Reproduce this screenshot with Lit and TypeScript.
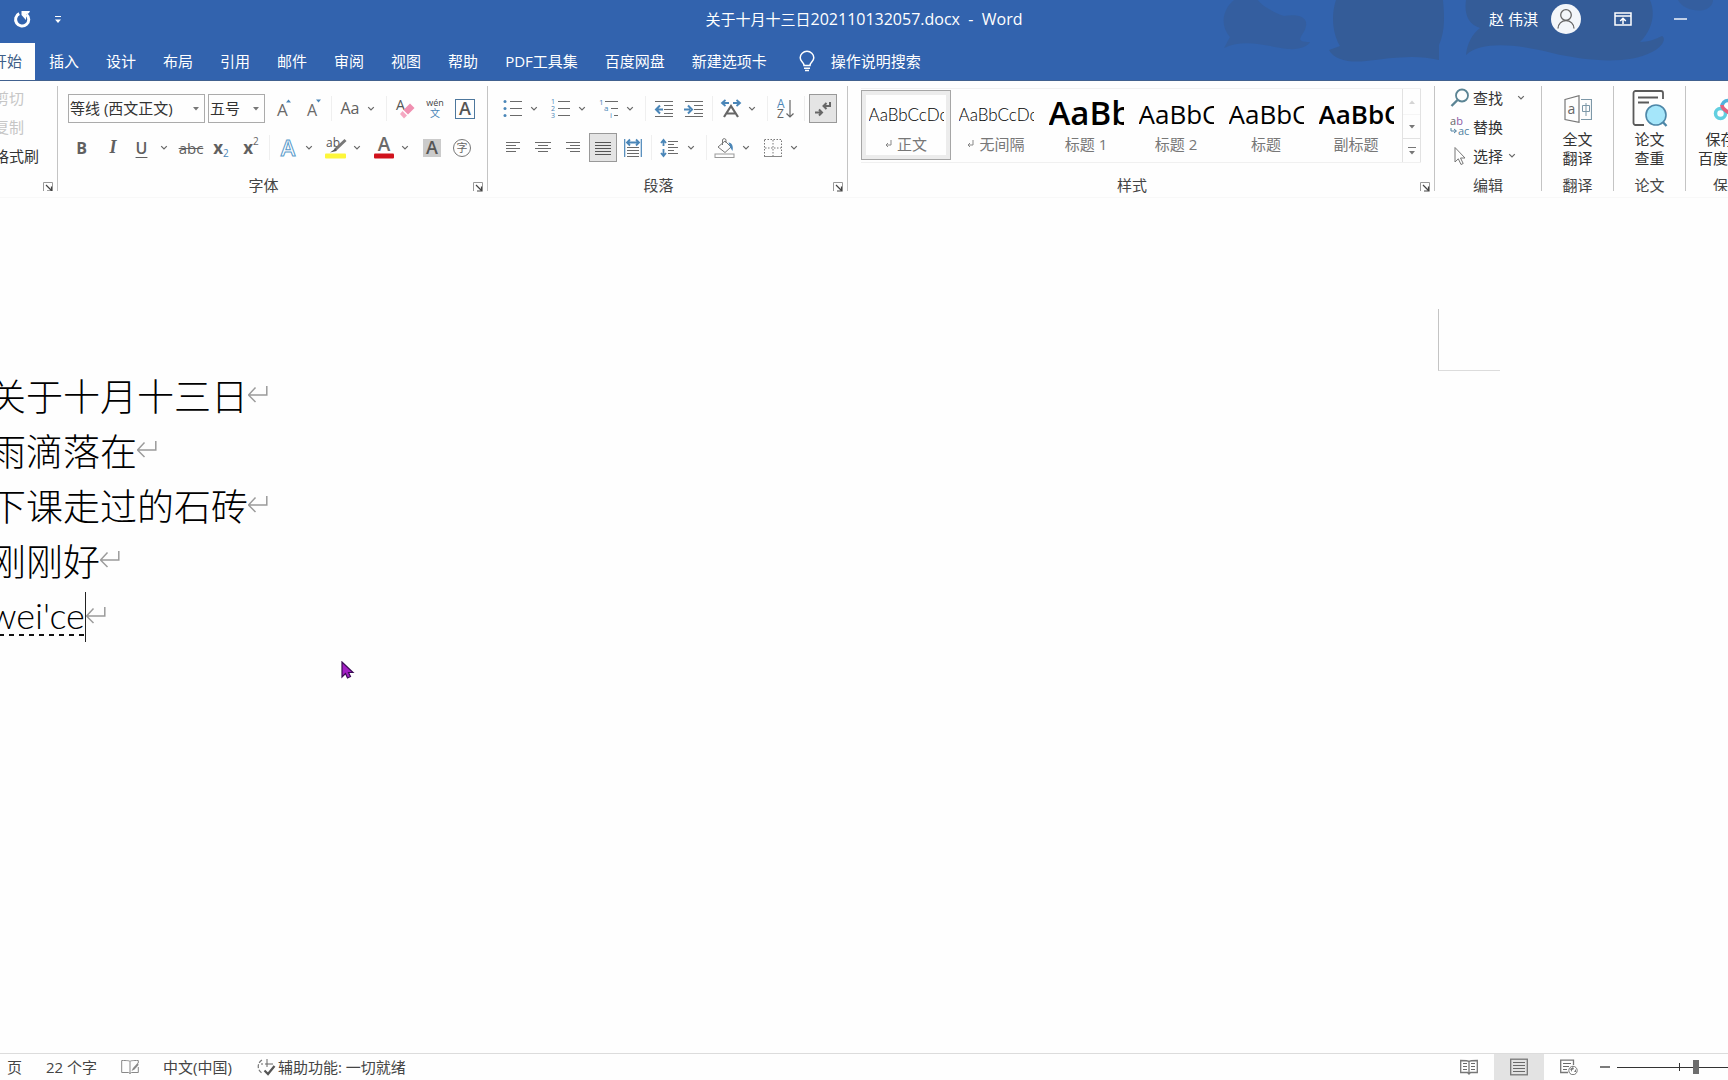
import { LitElement, html, svg, css, nothing, TemplateResult } from "lit";
import { customElement, property } from "lit/decorators.js";

const icon = (w: number, h: number, body: unknown) =>
  html`<svg width=${w} height=${h} viewBox="0 0 ${w} ${h}" fill="none" aria-hidden="true">${body}</svg>`;

const BLUE = "#4a86b8";
const GREY = "#6a6a6a";

const lines = (rows: [number, number, number][], color = GREY) =>
  rows.map(([x1, x2, y]) => svg`<path d="M${x1} ${y}H${x2}" stroke=${color} />`);

const icons = {
  undo: icon(20, 20, svg`<path d="M7.2 4.6A6.6 6.6 0 1 0 14.6 5.6" stroke="#fff" stroke-width="3"/><path d="M9.5 2H18l-1 2-2.5 1.5-.6 5.5L9.5 6z" fill="#fff"/>`),
  customize: icon(8, 10, svg`<path d="M1 2.5H7" stroke="#fff"/><path d="M1 5.500H7L4 9z" fill="#fff"/>`),
  bulb: icon(18, 22, svg`<path d="M6 15.500C6 12.500 2.200 11.500 2.200 7.800a6.800 6.500 0 0 1 13.600 0C15.800 11.500 12 12.500 12 15.500z" stroke="#fff" stroke-width="1.500"/><path d="M6 18.300H12M7 20.500H11" stroke="#fff" stroke-width="1.500"/>`),
  person: icon(30, 30, svg`<circle cx="15" cy="15" r="15" fill="#f3f6fa"/><circle cx="15" cy="11" r="5.300" stroke="#666" stroke-width="1.300"/><path d="M7 24.500a8 8 0 0 1 16 0" stroke="#666" stroke-width="1.300"/>`),
  ribbonOptions: icon(18, 14, svg`<path d="M1 1H17V13H1zM1 4H17" stroke="#fff" stroke-width="1.500"/><path d="M9 12V6.500M6.200 9L9 6.200L11.800 9" stroke="#fff" stroke-width="1.500"/>`),
  minimize: icon(13, 2, svg`<path d="M0 1H13" stroke="#fff" stroke-width="1.400"/>`),
  chevron: icon(8, 6, svg`<path d="M1.200 1.200L4 4L6.800 1.200" stroke="#666" stroke-width="1.200"/>`),
  down: icon(6, 4, svg`<path d="M0 0H6L3 3.500z" fill="#777"/>`),
  launcher: icon(10, 10, svg`<path d="M.5 9V.5H9.500V9.500" stroke="#999"/><path d="M3 3L8 8M8.500 4.500V9H4" stroke="#444" stroke-width="1.200"/>`),
  grow: icon(20, 20, svg`<text x="4" y="17" font-size="17" fill="#6a6a6a">A</text><path d="M13 3.500L15.500 .5L18 3.500z" fill=${BLUE}/>`),
  shrink: icon(20, 20, svg`<text x="4" y="17" font-size="16" fill="#6a6a6a">A</text><path d="M13 .5L15.500 3.500L18 .5z" fill=${BLUE}/>`),
  eraser: icon(20, 22, svg`<text x="1" y="12" font-size="14" fill="#555">A</text><path d="M15 5.500L19.500 10L13 16.500L8.500 12z" fill="#f08fb0"/><path d="M7.500 13L12 17.500L9 20.500L5 16z" fill="#f5a8c2"/>`),
  phonetic: icon(20, 22, svg`<text x="10" y="8" font-size="9" text-anchor="middle" fill="#444">wén</text><text x="10" y="19" font-size="10" text-anchor="middle" fill=${BLUE}>文</text>`),
  boxedA: icon(20, 20, svg`<rect x=".5" y=".5" width="19" height="19" stroke="#4d779d"/><text x="10" y="16" font-size="18" font-weight="600" text-anchor="middle" fill="#555">A</text>`),
  outlineA: icon(20, 20, svg`<text x="10" y="18" font-size="22" font-weight="600" text-anchor="middle" fill="#fff" stroke="#5a9bcb">A</text>`),
  highlight: icon(22, 22, svg`<text x="1" y="10" font-size="12" fill="#555">ab</text><path d="M20.500 3L10 13" stroke="#777" stroke-width="3"/><path d="M10.500 11.500L5 15.500L11.500 14z" fill="#555"/><rect y="16.500" width="21" height="5" rx="1" fill="#fdf63a"/>`),
  fontColor: icon(20, 22, svg`<text x="10" y="14" font-size="19" font-weight="600" text-anchor="middle" fill="#6a6a6a">A</text><rect y="16.500" width="20" height="5" rx="1" fill="#d0121c"/>`),
  shadedA: icon(18, 18, svg`<rect width="18" height="18" fill="#cbcbcb"/><text x="9" y="15" font-size="18" font-weight="600" text-anchor="middle" fill="#555">A</text>`),
  circled: icon(20, 20, svg`<circle cx="10" cy="10" r="8.500" stroke="#777"/><text x="10" y="14" font-size="11" text-anchor="middle" fill="#666">字</text>`),
  bullets: icon(20, 20, svg`${lines([[7, 19, 2.5], [7, 19, 9.5], [7, 19, 16.5]])}<circle cx="2" cy="2.500" r="1.500" fill=${BLUE}/><circle cx="2" cy="9.500" r="1.500" fill=${BLUE}/><circle cx="2" cy="16.500" r="1.500" fill=${BLUE}/>`),
  numbers: icon(20, 20, svg`${lines([[7, 19, 2.5], [7, 19, 9.5], [7, 19, 16.5]])}<g font-size="7" fill=${BLUE}><text x="0" y="5">1</text><text x="0" y="12">2</text><text x="0" y="19">3</text></g>`),
  multilevel: icon(20, 20, svg`${lines([[6, 19, 2.5], [12, 19, 9.5], [15, 19, 16.5]])}<g font-size="8" fill=${BLUE}><text x="0" y="6">1</text><text x="5" y="12">a</text><text x="11" y="19">i</text></g>`),
  outdent: icon(20, 18, svg`${lines([[1, 19, 1.5], [10, 19, 5.5], [10, 19, 9.5], [10, 19, 13.5], [1, 19, 16.5]])}<path d="M9 9.500H3M6 5.500L2 9.500L6 13.500" stroke=${BLUE} stroke-width="2"/>`),
  indent: icon(20, 18, svg`${lines([[1, 19, 1.5], [10, 19, 5.5], [10, 19, 9.5], [10, 19, 13.5], [1, 19, 16.5]])}<path d="M0 9.500H6M4 5.500L8 9.500L4 13.500" stroke=${BLUE} stroke-width="2"/>`),
  asian: icon(22, 20, svg`<path d="M9 4H3M5.500 1L2 4L5.500 7M13 4H19M16.500 1L20 4L16.500 7" stroke=${BLUE} stroke-width="1.800"/><path d="M4 18L11 7L18 18M7 14.500H15" stroke="#666" stroke-width="2.200"/>`),
  sort: icon(20, 22, svg`<text x="1" y="10" font-size="12" fill=${BLUE}>A</text><text x="1" y="20" font-size="12" fill="#666">Z</text><path d="M14 2V19M10.500 15.500L14 19L17.500 15.500" stroke="#666" stroke-width="1.200"/>`),
  marks: icon(18, 18, svg`<path d="M16 2V6H10M12.500 3L9.500 6L12.500 9M1 12.500H8M5 9.500L8 12.500L5 15.500" stroke="#666" stroke-width="2"/>`),
  left: icon(16, 14, svg`${lines([[1, 15, 1.5], [1, 11, 4.5], [1, 15, 7.5], [1, 11, 10.5]])}`),
  center: icon(16, 14, svg`${lines([[0, 16, 1.5], [3, 13, 4.5], [0, 16, 7.5], [3, 13, 10.5]])}`),
  right: icon(16, 14, svg`${lines([[1, 15, 1.5], [5, 15, 4.5], [1, 15, 7.5], [5, 15, 10.5]])}`),
  justify: icon(16, 14, svg`${lines([[0, 16, 1.5], [0, 16, 4.5], [0, 16, 7.5], [0, 16, 10.5], [0, 16, 13.5]], "#555")}`),
  distribute: icon(18, 20, svg`<path d="M.7 1V19M17.300 1V19" stroke=${BLUE} stroke-width="1.200"/><path d="M3 4.500H15M6 1.500L3 4.500L6 7.500M12 1.500L15 4.500L12 7.500" stroke=${BLUE} stroke-width="1.800"/>${lines([[3, 15, 9.5], [3, 15, 12.5], [3, 15, 15.5], [3, 15, 18.5]])}`),
  spacing: icon(20, 20, svg`${lines([[8, 18, 3.5], [8, 14, 6.5], [8, 18, 9.5], [8, 14, 12.5], [8, 18, 15.5]])}<path d="M3.500 8V2M1 5L3.500 2L6 5M3.500 11V18M1 15L3.500 18L6 15" stroke=${BLUE} stroke-width="1.800"/>`),
  bucket: icon(22, 22, svg`<path d="M4 10L11 4L17 10L11 15.500z" stroke="#777"/><path d="M8.500 8V3a1.800 1.800 0 0 1 3.500 0V6" stroke="#777"/><path d="M14.500 5.500C18 6 19.500 9 18.500 14L16.500 11z" fill=${BLUE}/><rect x="1" y="17" width="19" height="3.500" stroke="#999"/>`),
  borders: icon(18, 18, svg`<path d="M.5 .5H17.500V17.500H.5zM9 1V17M1 9H17" stroke="#777" stroke-dasharray="1.500 1.500"/><path d="M0 17.500H18" stroke="#888"/>`),
  find: icon(20, 20, svg`<circle cx="12" cy="7.500" r="6" stroke="#5b8494" stroke-width="1.800"/><path d="M7.500 12L1.500 18" stroke="#5b8494" stroke-width="2.400"/>`),
  replace: icon(20, 20, svg`<g font-size="11"><text x="0" y="8" fill="#666">a<tspan fill="#8d5ba6">b</tspan></text><text x="8" y="18" fill="#5080a0">ac</text></g><path d="M1 11V14H6M4 12L6.500 14L4 16" stroke="#5080a0"/>`),
  select: icon(20, 20, svg`<path d="M5 1.500V16L8.300 12.800L11 18.500L13.200 17.500L10.500 12H15z" stroke="#777"/>`),
  translate: icon(28, 28, svg`<path d="M1 4.500L15 .7V27.300L1 24.500z" stroke="#777" stroke-width="1.200"/><path d="M17 4.500H27.500V24.500H17" stroke="#7d98a8" stroke-width="1.200"/><text x="3.500" y="18.500" font-size="14" fill="#666">a</text><path d="M18.500 10.500H25.500V16.500H18.500zM22 8V21" stroke="#7d98a8"/>`),
  paper: icon(36, 38, svg`<path d="M12 35H3.500a2 2 0 0 1-2-2V3a2 2 0 0 1 2-2H29a2 2 0 0 1 2 2V9" stroke="#5a5a5a" stroke-width="1.800"/><path d="M6 7.500H26M6 12.500H17" stroke="#5a5a5a" stroke-width="2"/><path d="M29 30L34.500 36" stroke="#4d87a8" stroke-width="2.400"/><circle cx="24" cy="25" r="10" fill="#a5e6fa" stroke="#4d87a8" stroke-width="1.600"/>`),
  cloud: icon(30, 24, svg`<circle cx="7.500" cy="16.500" r="5" stroke="#62cfe0" stroke-width="3.500"/><circle cx="22.500" cy="16.500" r="5" stroke="#62cfe0" stroke-width="3.500"/><path d="M9 9.500a6 6 0 1 1 12 0" stroke="#4fb3dd" stroke-width="3.500"/><path d="M9 8C9 14 15 13 18 18" stroke="#e4637f" stroke-width="3.500"/>`),
  smallReturn: icon(7, 8, svg`<path d="M6 0V5H1M3 3L1 5L3 7" stroke="#888"/>`),
  returnMark: html`<svg class="ret" width="20" height="18" viewBox="0 0 20 18" fill="none" aria-hidden="true"><path d="M18.800 1V10H.5M7.500 2.500L.5 10L7.500 17" stroke="#9b9b9b" stroke-width="1.500"/></svg>`,
  proof: icon(18, 16, svg`<path d="M9 2.500V14.500M9 2.500C8 1.500 6 1.500 .7 1.500V13.500H7.500L9 14.500L10.500 13.500H17.300V8M9 2.500C10 1.500 12 1.500 17.300 1.500V4" stroke="#888"/><path d="M17 3.500L12 9L10.500 12L13.500 10.500L17.500 6z" fill="#888"/>`),
  access: icon(20, 18, svg`<path d="M6 2A7.500 7.500 0 0 0 6 15" stroke="#777" stroke-width="1.200" stroke-dasharray="4 1.500"/><path d="M9 6H17M11 1V9M5 6H7" stroke="#666"/><path d="M8.500 12.500L12 16L18.500 8" stroke="#555" stroke-width="2.200"/>`),
  read: icon(18, 16, svg`<path d="M9 2.500C8 1.500 6 1.500 .7 1.500V13.500H7.500L9 15L10.500 13.500H17.300V1.500C12 1.500 10 1.500 9 2.500V15" stroke="#777" stroke-width="1.300"/>${lines([[3, 7, 4.5], [3, 7, 7.5], [3, 7, 10.5], [11, 15, 4.5], [11, 15, 7.5], [11, 15, 10.5]])}`),
  print: icon(18, 18, svg`<rect x=".7" y="1.200" width="16.600" height="15.600" stroke="#777" stroke-width="1.300"/>${lines([[3, 15, 4.5], [3, 15, 7.5], [3, 15, 10.5], [3, 15, 13.5]])}`),
  web: icon(18, 16, svg`<path d="M8 13.500H.7V1.200H13.500V6" stroke="#777" stroke-width="1.300"/>${lines([[3, 11, 4.5], [3, 9, 7.5], [3, 7, 10.5]])}<circle cx="13" cy="11.500" r="4.200" fill="#fff" stroke="#777"/><path d="M10 10l3-2 1 2-2 1v2zM14 13l2-3v3z" fill="#777"/>`),
  pointer: icon(14, 18, svg`<path d="M1 1V16L4.500 12.500L6.500 17L9.500 15.500L7.500 11.500H12z" fill="#a31fc4" stroke="#3a0c55" stroke-width="1.200"/>`),
  art: html`<svg class="art" width="528" height="81" viewBox="0 0 528 81" aria-hidden="true">
    <g fill="#345c98">
      <path d="M34 0C22 10 20 26 30 37L24 48C45 38 70 47 88 49C100 50 108 46 110 42C92 42 104 36 106 26C108 16 96 14 84 16C72 12 60 4 58 0z" opacity=".7"/>
      <path d="M136 0C130 18 134 36 140 46L129 50C134 60 150 63 166 61C190 58 216 54 239 60V45C246 30 244 12 243 0z"/>
      <path d="M266 0C264 14 268 24 280 28C272 34 267 44 266 55C282 40 320 45 352 53C390 62 430 64 452 52C464 46 466 38 462 36C456 39 448 42 440 42C452 30 456 14 450 0z"/>
      <path d="M478 0C482 8 494 12 504 10C510 8 513 4 513 0z" opacity=".7"/>
    </g>
  </svg>`,
};

const base = css`
  * { box-sizing: border-box; }
  svg { display: block; flex: none; }
  button, select, a {
    font: inherit; color: inherit; background: none; border: 0; padding: 0; margin: 0;
    text-decoration: none; white-space: nowrap;
  }
`;

@customElement("ribbon-group")
class RibbonGroup extends LitElement {
  @property() label = "";
  @property({ type: Boolean }) launcher = false;

  static styles = [base, css`
    :host { display: flex; flex-direction: column; flex: none; border-right: 1px solid #c4c4c4; }
    .body { flex: 1; min-width: 0; }
    .foot { display: flex; height: 16px; line-height: 20px; color: #444; }
    .name { flex: 1; text-align: center; white-space: nowrap; }
    .launch { width: 18px; height: 17px; display: grid; place-items: end center; }
  `];

  render() {
    return html`
      <div class="body"><slot></slot></div>
      <div class="foot">
        <span class="name">${this.label}</span>
        ${this.launcher ? html`<button class="launch" aria-label="${this.label}设置">${icons.launcher}</button>` : nothing}
      </div>`;
  }
}

const tool = (label: string, content: unknown, cls = "") =>
  html`<button class="tool ${cls}" aria-label=${label}>${content}</button>`;
const more = (label: string) =>
  html`<button class="more" aria-label="${label}选项">${icons.chevron}</button>`;
const sep = html`<span class="sep"></span>`;

const combo = (label: string, value: string, cls: string) => html`
  <label class="combo ${cls}">
    <select aria-label=${label}><option>${value}</option></select>
    ${icons.down}
  </label>`;

const tabs = ["插入", "设计", "布局", "引用", "邮件", "审阅", "视图", "帮助", "PDF工具集", "百度网盘", "新建选项卡"];

const styleItems: { name: string; sample: string; cls: string; mark?: boolean }[] = [
  { name: "正文", sample: "AaBbCcDc", cls: "body-sample on", mark: true },
  { name: "无间隔", sample: "AaBbCcDc", cls: "body-sample", mark: true },
  { name: "标题 1", sample: "AaBb", cls: "h1-sample" },
  { name: "标题 2", sample: "AaBbC", cls: "h2-sample" },
  { name: "标题", sample: "AaBbC", cls: "h2-sample" },
  { name: "副标题", sample: "AaBbC", cls: "h2-sample strong" },
];

const paragraphs = ["关于十月十三日", "雨滴落在", "下课走过的石砖", "刚刚好"];

@customElement("app-root")
class AppRoot extends LitElement {
  static styles = [base, css`
    :host {
      display: flex; flex-direction: column; min-height: 100vh; overflow: hidden;
      background: #fefefe; color: #333;
      font: 15px/20px "Open Sans", "Noto Sans CJK SC", sans-serif;
    }
    header { position: relative; background: #3263ae; color: #fff; border-bottom: 1px solid #41618f; }
    .art { position: absolute; top: 0; right: 0; }
    .title { position: relative; display: grid; grid-template-columns: 1fr auto 1fr; align-items: center; height: 38px; }
    .quick { display: flex; align-items: center; gap: 16px; padding-left: 12px; }
    .quick button { min-width: 20px; display: grid; place-items: center; }
    .doc-name { font-size: 15px; font-weight: 400; margin: 0; white-space: pre; }
    .doc-name span { font-size: 16px; }
    .account { display: flex; align-items: center; justify-content: flex-end; padding-right: 41px; }
    .user { display: flex; align-items: center; gap: 13px; margin-right: 33px; }
    .account .min { margin-left: 42px; padding: 8px 0; }
    nav { position: relative; display: flex; gap: 1px; padding-top: 5px; height: 42px; }
    nav a, nav button { display: flex; align-items: center; padding: 0 13px 2px; }
    nav .home { width: 35px; padding-left: 0; justify-content: flex-end; overflow: hidden; background: #fefefe; color: #3f5f88; }
    nav .tell { gap: 15px; margin-left: 4px; }

    .ribbon { display: flex; height: 117px; padding: 5px 0 6px; border-bottom: 1px solid #f8f8f8; }
    .clip { width: 58px; overflow: hidden; }
    .clip-list { display: flex; flex-direction: column; align-items: flex-end; padding-right: 18px; gap: 4px; }
    .clip-list button { width: 45px; height: 25px; text-align: left; padding-bottom: 2px; }
    .clip-list button:disabled { color: #c6c6c6; }
    .fonts { width: 430px; }
    .para { width: 360px; }
    .rows { display: flex; flex-direction: column; gap: 10px; padding: 8px 0 0 10px; }
    .row { display: flex; height: 29px; }
    .tool { width: 30px; display: grid; place-items: center; color: #606060; }
    .more { width: 18px; display: grid; align-items: center; padding-left: 2px; }
    .sep { width: 1px; margin: 2px 3px; background: #efefef; }
    .pressed { width: 28px; margin: 0 1px; background: #e4e4e4; border: 1px solid #999; }
    .bold { font-weight: 700; font-size: 16px; padding-right: 3px; }
    .italic { font: italic 700 18px "Liberation Serif", serif; }
    .under { font-weight: 600; font-size: 16px; padding-right: 3px; text-decoration: underline; text-underline-offset: 3px; }
    .strike { text-decoration: line-through; }
    .script { display: flex; align-items: center; justify-content: center; font-weight: 700; font-size: 17px; }
    .script sub, .script sup { font-size: 10px; font-weight: 400; color: #4a86b8; line-height: 10px; }
    .script sub { align-self: flex-end; padding-bottom: 4px; }
    .script sup { align-self: flex-start; padding-top: 3px; color: #666; }
    .case { font-size: 16px; padding-bottom: 1px; }
    .combo { display: grid; border: 1px solid #ababab; margin-right: 3px; align-items: center; }
    .combo > * { grid-area: 1 / 1; }
    .combo select { appearance: none; height: 100%; padding: 0 0 2px 1px; outline: 0; }
    .combo svg { justify-self: end; margin-right: 5px; pointer-events: none; }
    .family { width: 137px; }
    .size { width: 57px; }

    .styles { flex: 1 1 auto; min-width: 0; }
    .gallery { display: flex; height: 75px; margin: 2px 13px 0 13px; border-top: 1px solid #f0f0f0; border-bottom: 1px solid #f0f0f0; }
    .items { display: flex; flex: 1; padding: 1px 0 2px; }
    .item { flex: 0 0 90px; display: flex; flex-direction: column; align-items: center; overflow: hidden; border: 1px solid transparent; }
    .item.on { border-color: #a6a6a6; box-shadow: inset 0 0 0 4px #ececec; }
    .sample { width: 75px; height: 43px; overflow: hidden; color: #000; display: flex; align-items: center; }
    .body-sample .sample { font: 300 17px/43px Lato, sans-serif; padding-top: 4px; }
    .h1-sample .sample { font-size: 33px; font-weight: 600; line-height: 43px; }
    .h2-sample .sample { font-size: 26px; font-weight: 400; line-height: 43px; padding-top: 3px; }
    .strong .sample { font-weight: 600; }
    .caption { display: flex; align-items: center; gap: 5px; color: #777; }
    .scroll { width: 19px; display: grid; grid-template-rows: 26px 24px 1fr; border: 1px solid #e2e2e2; border-width: 0 1px; }
    .scroll button { display: grid; place-items: center; border-bottom: 1px solid #e2e2e2; }
    .scroll button:last-child { border-bottom: 0; }
    .scroll button:disabled { opacity: .3; }

    .edit { width: 107px; }
    .edit-list { display: flex; flex-direction: column; gap: 4px; padding-left: 15px; }
    .edit-list button { display: flex; align-items: center; gap: 3px; height: 25px; padding-bottom: 2px; }
    .edit-list .chev { margin-left: 2px; }
    .edit-list .far { margin-left: 11px; }
    .wide { width: 72px; }
    .big { width: 100%; display: flex; flex-direction: column; align-items: center; line-height: 19px; padding-top: 2px; }
    .pic { height: 42px; display: grid; place-items: center; }
    .save { width: 42px; overflow: hidden; display: flex; }
    .save-in { width: 84px; border: 0; }

    main { position: relative; flex: 1; display: flex; justify-content: space-between; align-items: flex-start; }
    .text { margin: 171px 0 0 -11px; font: 300 37px/55px "Noto Sans CJK SC", sans-serif; color: #000; }
    .text p { margin: 0; display: flex; align-items: center; height: 55px; white-space: nowrap; }
    .text p:not(:last-child) { padding-bottom: 2px; }
    .ret { margin-bottom: 3px; }
    .typing { border-right: 1px solid #222; height: 50px; }
    .typing span {
      display: block; height: 44px; font: 300 36px/46px Lato, sans-serif;
      background: repeating-linear-gradient(90deg, #111 0 5px, transparent 5px 10px) bottom / 100% 2px no-repeat;
    }
    .corner { width: 62px; height: 62px; margin: 111px 228px 0 0; border: solid #c4c4c4; border-width: 0 0 1px 1px; border-bottom-color: #dcdcdc; }
    .pointer { position: absolute; left: 341px; top: 463px; }

    footer { display: flex; align-items: stretch; height: 27px; border-top: 1px solid #dcdcdc; color: #444; overflow: hidden; }
    footer button { display: flex; align-items: center; gap: 2px; }
    .info { display: flex; gap: 24px; padding-left: 7px; flex: 1; }
    .view { width: 50px; justify-content: center; }
    .view.active { background: #e3e3e3; }
    .zoom-out { padding: 0 7px 0 6px; }
    .zoom { width: 111px; overflow: hidden; }
    .zoom input {
      appearance: none; display: block; width: 125px; height: 26px; margin: 0;
      background:
        linear-gradient(#333, #333) center / 1px 8px no-repeat,
        linear-gradient(#333, #333) center / 100% 1px no-repeat;
    }
    .zoom input::-webkit-slider-thumb { appearance: none; width: 6px; height: 14px; background: #6e6e6e; }
  `];

  private fontGroup(): TemplateResult {
    return html`
      <ribbon-group class="fonts" label="字体" launcher>
        <div class="rows">
          <div class="row">
            ${combo("字体", "等线 (西文正文)", "family")}${combo("字号", "五号", "size")}
            ${tool("增大字号", icons.grow)}${tool("减小字号", icons.shrink)}${sep}
            ${tool("更改大小写", "Aa", "case")}${more("更改大小写")}${sep}
            ${tool("清除格式", icons.eraser)}${tool("拼音指南", icons.phonetic)}${tool("字符边框", icons.boxedA)}
          </div>
          <div class="row">
            ${tool("加粗", "B", "bold")}${tool("倾斜", "I", "italic")}${tool("下划线", "U", "under")}${more("下划线")}
            ${tool("删除线", "abc", "strike")}
            ${tool("下标", html`x<sub>2</sub>`, "script")}${tool("上标", html`x<sup>2</sup>`, "script")}${sep}
            ${tool("文本效果", icons.outlineA)}${more("文本效果")}
            ${tool("突出显示", icons.highlight)}${more("突出显示")}
            ${tool("字体颜色", icons.fontColor)}${more("字体颜色")}
            ${tool("字符底纹", icons.shadedA)}${tool("带圈字符", icons.circled)}
          </div>
        </div>
      </ribbon-group>`;
  }

  private paragraphGroup(): TemplateResult {
    return html`
      <ribbon-group class="para" label="段落" launcher>
        <div class="rows">
          <div class="row">
            ${tool("项目符号", icons.bullets)}${more("项目符号")}${tool("编号", icons.numbers)}${more("编号")}
            ${tool("多级列表", icons.multilevel)}${more("多级列表")}${sep}
            ${tool("减少缩进", icons.outdent)}${tool("增加缩进", icons.indent)}${sep}
            ${tool("中文版式", icons.asian)}${more("中文版式")}${sep}
            ${tool("排序", icons.sort)}${sep}${tool("显示编辑标记", icons.marks, "pressed")}
          </div>
          <div class="row">
            ${tool("左对齐", icons.left)}${tool("居中", icons.center)}${tool("右对齐", icons.right)}
            ${tool("两端对齐", icons.justify, "pressed")}${tool("分散对齐", icons.distribute)}${sep}
            ${tool("行距", icons.spacing)}${more("行距")}${sep}
            ${tool("底纹", icons.bucket)}${more("底纹")}${tool("边框", icons.borders)}${more("边框")}
          </div>
        </div>
      </ribbon-group>`;
  }

  private stylesGroup(): TemplateResult {
    return html`
      <ribbon-group class="styles" label="样式" launcher>
        <div class="gallery">
          <div class="items">
            ${styleItems.map((s) => html`
              <button class="item ${s.cls}">
                <span class="sample">${s.sample}</span>
                <span class="caption">${s.mark ? icons.smallReturn : nothing}${s.name}</span>
              </button>`)}
          </div>
          <div class="scroll">
            <button disabled aria-label="上一行">${icon(6, 4, svg`<path d="M0 4H6L3 .5z" fill="#777"/>`)}</button>
            <button aria-label="下一行">${icons.down}</button>
            <button aria-label="其他样式">${icon(8, 8, svg`<path d="M0 .5H8" stroke="#777"/><path d="M1 4H7L4 7.500z" fill="#777"/>`)}</button>
          </div>
        </div>
      </ribbon-group>`;
  }

  render() {
    return html`
      <header>
        ${icons.art}
        <div class="title">
          <div class="quick">
            <button aria-label="重复">${icons.undo}</button>
            <button aria-label="自定义快速访问工具栏">${icons.customize}</button>
          </div>
          <h1 class="doc-name">关于十月十三日<span>202110132057.docx  -  Word</span></h1>
          <div class="account">
            <button class="user">赵 伟淇${icons.person}</button>
            <button aria-label="功能区显示选项">${icons.ribbonOptions}</button>
            <button class="min" aria-label="最小化">${icons.minimize}</button>
          </div>
        </div>
        <nav>
          <a class="home" href="#home">开始</a>
          ${tabs.map((t) => html`<a href="#${t}">${t}</a>`)}
          <button class="tell">${icons.bulb}操作说明搜索</button>
        </nav>
      </header>

      <section class="ribbon">
        <ribbon-group class="clip" launcher>
          <div class="clip-list">
            <button disabled>剪切</button>
            <button disabled>复制</button>
            <button>格式刷</button>
          </div>
        </ribbon-group>
        ${this.fontGroup()}${this.paragraphGroup()}${this.stylesGroup()}
        <ribbon-group class="edit" label="编辑">
          <div class="edit-list">
            <button>${icons.find}查找<span class="far">${icons.chevron}</span></button>
            <button>${icons.replace}替换</button>
            <button>${icons.select}选择<span class="chev">${icons.chevron}</span></button>
          </div>
        </ribbon-group>
        <ribbon-group class="wide" label="翻译">
          <button class="big"><span class="pic">${icons.translate}</span>全文<br>翻译</button>
        </ribbon-group>
        <ribbon-group class="wide" label="论文">
          <button class="big"><span class="pic">${icons.paper}</span>论文<br>查重</button>
        </ribbon-group>
        <div class="save">
          <ribbon-group class="save-in" label="保存">
            <button class="big"><span class="pic">${icons.cloud}</span>保存到<br>百度网盘</button>
          </ribbon-group>
        </div>
      </section>

      <main>
        <div class="text">
          ${paragraphs.map((p) => html`<p>${p}${icons.returnMark}</p>`)}
          <p><span class="typing"><span>wei'ce</span></span>${icons.returnMark}</p>
        </div>
        <div class="corner"></div>
        <div class="pointer">${icons.pointer}</div>
      </main>

      <footer>
        <div class="info">
          <button>页</button>
          <button>22 个字</button>
          <button aria-label="校对">${icons.proof}</button>
          <button>中文(中国)</button>
          <button>${icons.access}辅助功能: 一切就绪</button>
        </div>
        <button class="view" aria-label="阅读视图">${icons.read}</button>
        <button class="view active" aria-label="页面视图">${icons.print}</button>
        <button class="view" aria-label="Web 版式视图">${icons.web}</button>
        <button class="zoom-out" aria-label="缩小">${icon(10, 2, svg`<path d="M0 1H10" stroke="#333" stroke-width="1.300"/>`)}</button>
        <div class="zoom"><input type="range" min="0" max="100" value="64" aria-label="缩放"></div>
      </footer>`;
  }
}
